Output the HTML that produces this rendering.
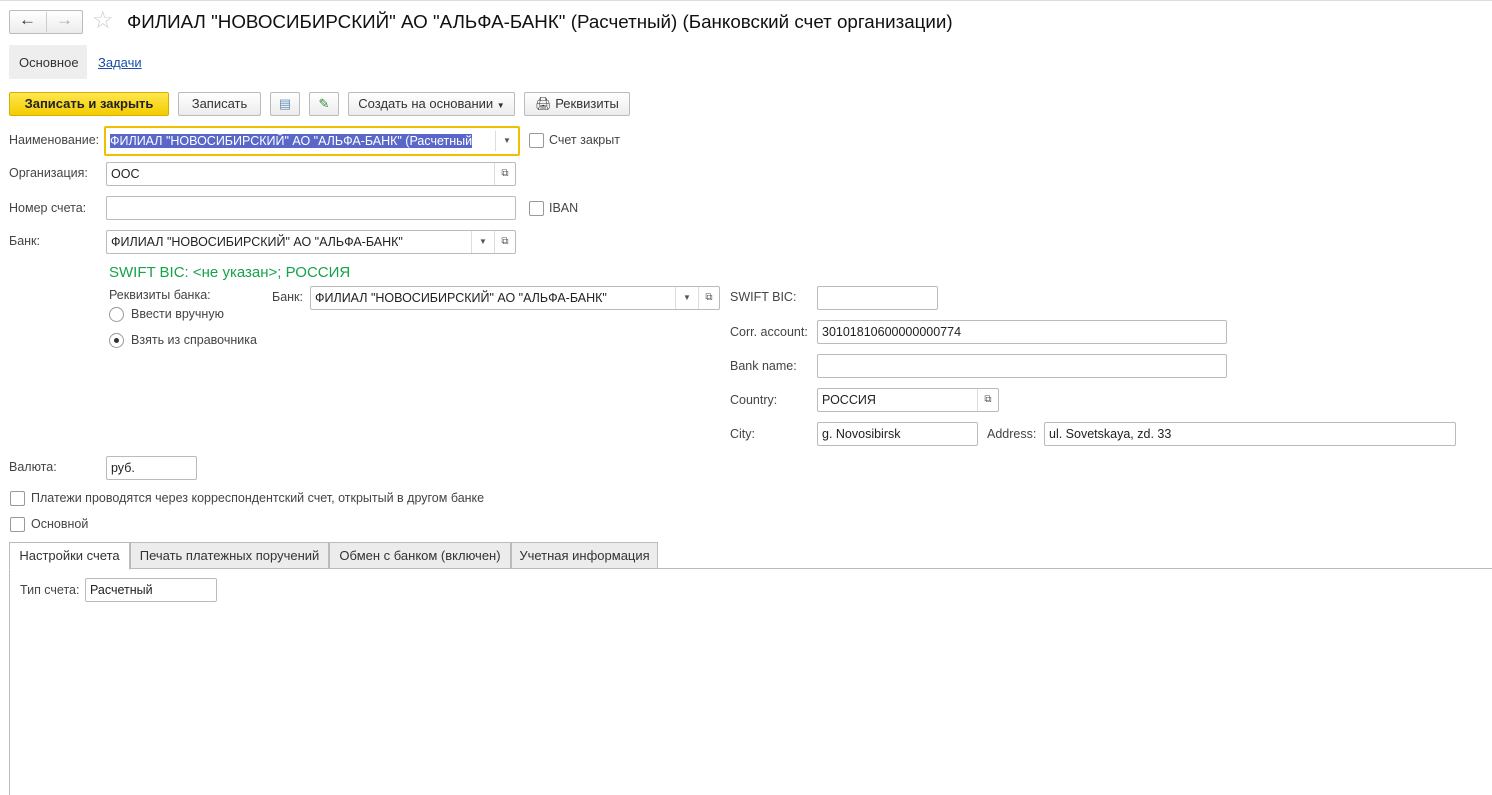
<!DOCTYPE html><html><head><meta charset="utf-8"><style>
body{margin:0;width:1492px;height:795px;background:#fff;font-family:"Liberation Sans",Arial,sans-serif;font-size:13px;color:#333;position:relative;overflow:hidden}
.a{position:absolute;white-space:nowrap}
.btn{position:absolute;height:24px;border:1px solid #bbb;border-radius:2px;background:linear-gradient(#fff,#ececec);box-sizing:border-box;text-align:center;line-height:22px;color:#333}
.in{position:absolute;height:24px;border:1px solid #bbb;border-radius:2px;background:#fff;box-sizing:border-box;line-height:22px;padding-left:4px;color:#222;overflow:hidden;font-size:12.5px}
.dd{position:absolute;right:0;top:0;width:22px;height:22px;border-left:1px solid #ddd;text-align:center;font-size:8px;color:#555}
.ob{position:absolute;right:0;top:0;width:20px;height:22px;border-left:1px solid #ddd;text-align:center;font-size:10px;color:#555}
.cb{position:absolute;width:13px;height:13px;border:1px solid #999;border-radius:2px;background:#fff}
.rb{position:absolute;width:13px;height:13px;border:1px solid #999;border-radius:50%;background:#fff}
.lab{position:absolute;color:#444;white-space:nowrap;font-size:12.5px}
.tab{position:absolute;top:542px;height:27px;box-sizing:border-box;border:1px solid #bbb;background:#ececec;line-height:25px;text-align:center;color:#333}
</style></head><body>
<div class="a" style="left:0;top:0;width:1492px;height:1px;background:#ddd"></div>
<div class="btn" style="left:9px;top:10px;width:74px;height:24px;"></div>
<div class="a" style="left:46px;top:12px;width:1px;height:20px;background:#ccc"></div>
<div class="a" style="left:19px;top:10px;font-size:17px;color:#333">&#8592;</div>
<div class="a" style="left:56px;top:10px;font-size:17px;color:#aaa">&#8594;</div>
<div class="a" style="left:92px;top:6px;font-size:24px;color:#ccc">&#9734;</div>
<div class="a" style="left:127px;top:11px;font-size:18.8px;color:#111">ФИЛИАЛ "НОВОСИБИРСКИЙ" АО "АЛЬФА-БАНК" (Расчетный) (Банковский счет организации)</div>
<div class="a" style="left:9px;top:45px;width:78px;height:34px;background:#eee;border-radius:2px"></div>
<div class="a" style="left:19px;top:55px;">Основное</div>
<div class="a" style="left:98px;top:55px;color:#1a4fa8;text-decoration:underline">Задачи</div>
<div class="btn" style="left:9px;top:92px;width:160px;background:linear-gradient(#ffe74d,#f4cc00);border-color:#d4b000;font-weight:bold;color:#222">Записать и закрыть</div>
<div class="btn" style="left:178px;top:92px;width:83px">Записать</div>
<div class="btn" style="left:270px;top:92px;width:30px;color:#6890b8">&#9636;</div>
<div class="btn" style="left:309px;top:92px;width:30px;color:#3a8a3a">&#9998;</div>
<div class="btn" style="left:348px;top:92px;width:167px">Создать на основании <span style="font-size:8px">&#9660;</span></div>
<div class="btn" style="left:524px;top:92px;width:106px">&#128424; Реквизиты</div>

<div class="lab" style="left:9px;top:133px">Наименование:</div>
<div class="in" style="left:104px;top:126px;width:416px;height:30px;border:2px solid #f0c000;padding:3px 0 0 4px;line-height:20px"><span style="background:#5968c8;color:#fff">ФИЛИАЛ "НОВОСИБИРСКИЙ" АО "АЛЬФА-БАНК" (Расчетный</span><div class="dd" style="top:3px;height:20px">&#9660;</div></div>
<div class="cb" style="left:529px;top:133px"></div><div class="lab" style="left:549px;top:133px">Счет закрыт</div>

<div class="lab" style="left:9px;top:166px">Организация:</div>
<div class="in" style="left:106px;top:162px;width:410px">ООС<div class="ob">&#10697;</div></div>
<div class="lab" style="left:9px;top:201px">Номер счета:</div>
<div class="in" style="left:106px;top:196px;width:410px"></div>
<div class="cb" style="left:529px;top:201px"></div><div class="lab" style="left:549px;top:201px">IBAN</div>
<div class="lab" style="left:9px;top:234px">Банк:</div>
<div class="in" style="left:106px;top:230px;width:410px">ФИЛИАЛ "НОВОСИБИРСКИЙ" АО "АЛЬФА-БАНК"<div class="ob" style="right:0">&#10697;</div><div class="dd" style="right:21px">&#9660;</div></div>
<div class="a" style="left:109px;top:264px;font-size:15px;color:#16a34a">SWIFT BIC: &lt;не указан&gt;; РОССИЯ</div>
<div class="lab" style="left:109px;top:288px">Реквизиты банка:</div>
<div class="rb" style="left:109px;top:307px"></div><div class="lab" style="left:131px;top:307px">Ввести вручную</div>
<div class="rb" style="left:109px;top:333px"></div><div class="a" style="left:114px;top:338px;width:5px;height:5px;border-radius:50%;background:#333"></div><div class="lab" style="left:131px;top:333px">Взять из справочника</div>
<div class="lab" style="left:272px;top:290px">Банк:</div>
<div class="in" style="left:310px;top:286px;width:410px">ФИЛИАЛ "НОВОСИБИРСКИЙ" АО "АЛЬФА-БАНК"<div class="ob">&#10697;</div><div class="dd" style="right:21px">&#9660;</div></div>
<div class="lab" style="left:730px;top:290px">SWIFT BIC:</div><div class="in" style="left:817px;top:286px;width:121px"></div>
<div class="lab" style="left:730px;top:325px">Corr. account:</div><div class="in" style="left:817px;top:320px;width:410px">30101810600000000774</div>
<div class="lab" style="left:730px;top:359px">Bank name:</div><div class="in" style="left:817px;top:354px;width:410px"></div>
<div class="lab" style="left:730px;top:393px">Country:</div><div class="in" style="left:817px;top:388px;width:182px">РОССИЯ<div class="ob">&#10697;</div></div>
<div class="lab" style="left:730px;top:427px">City:</div><div class="in" style="left:817px;top:422px;width:161px">g. Novosibirsk</div>
<div class="lab" style="left:987px;top:427px">Address:</div><div class="in" style="left:1044px;top:422px;width:412px">ul. Sovetskaya, zd. 33</div>
<div class="lab" style="left:9px;top:460px">Валюта:</div><div class="in" style="left:106px;top:456px;width:91px">руб.</div>
<div class="cb" style="left:10px;top:491px"></div><div class="lab" style="left:31px;top:491px">Платежи проводятся через корреспондентский счет, открытый в другом банке</div>
<div class="cb" style="left:10px;top:517px"></div><div class="lab" style="left:31px;top:517px">Основной</div>
<div class="a" style="left:9px;top:568px;width:1483px;height:1px;background:#bbb"></div>
<div class="a" style="left:9px;top:568px;width:1px;height:227px;background:#bbb"></div>
<div class="tab" style="left:130px;width:199px">Печать платежных поручений</div>
<div class="tab" style="left:329px;width:182px">Обмен с банком (включен)</div>
<div class="tab" style="left:511px;width:147px">Учетная информация</div>
<div class="tab" style="left:9px;width:121px;background:#fff;border-bottom-color:#fff;height:28px">Настройки счета</div>
<div class="lab" style="left:20px;top:583px">Тип счета:</div><div class="in" style="left:85px;top:578px;width:132px">Расчетный</div>
</body></html>
